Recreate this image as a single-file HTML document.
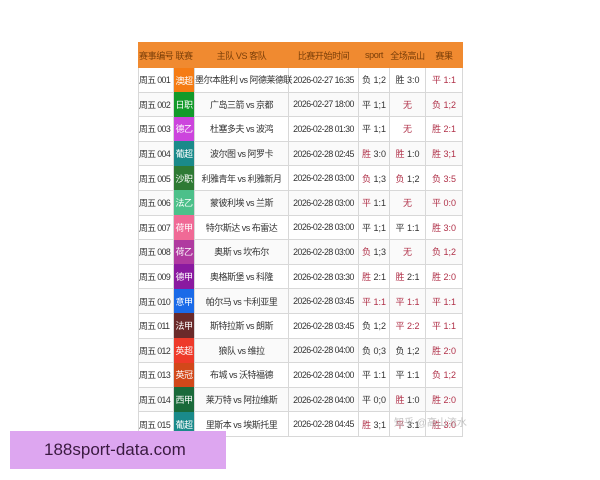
<!DOCTYPE html>
<html><head><meta charset="utf-8"><style>
body{margin:0;width:600px;height:480px;background:#fff;position:relative;overflow:hidden;font-family:"Liberation Sans","Noto Sans CJK SC",sans-serif;}
table{position:absolute;left:138px;top:42px;width:324px;border-collapse:collapse;table-layout:fixed;font-size:9px;color:#333;}
td,th{border:1px solid #d8d8d8;padding:0;text-align:center;white-space:nowrap;overflow:visible;height:23.6px;}
th{background:#f08a30;color:#7a3e08;font-weight:normal;height:24px;border-color:#f08a30;letter-spacing:-0.4px;}
td.lg{color:#fff;border:none;letter-spacing:-0.5px;}
td.c1{text-align:left;padding-left:0;letter-spacing:-0.6px;font-size:8.8px;}
td.t{letter-spacing:-0.55px;font-size:8.8px;}
td.m{letter-spacing:-0.5px;}
.r{color:#b03048;}
tr:nth-child(odd) td{background:#fafafa;}
.wm{position:absolute;left:394px;top:414px;color:rgba(170,170,170,.7);font-size:10px;}
.ban{position:absolute;left:10px;top:431px;width:216px;height:38px;background:#dda6f0;color:#3a1a40;font-size:17px;line-height:38px;text-indent:34px;}
</style></head><body>
<table>
<colgroup><col style="width:35px"><col style="width:21px"><col style="width:94px"><col style="width:70px"><col style="width:31px"><col style="width:36px"><col style="width:37px"></colgroup>
<tr><th>赛事编号</th><th>联赛</th><th>主队 VS 客队</th><th>比赛开始时间</th><th>sport</th><th>全场高山</th><th>赛果</th></tr>
<tr><td class="c1">周五 001</td><td class="lg" style="background:#f57c14">澳超</td><td class="m">墨尔本胜利 vs 阿德莱德联</td><td class="t">2026-02-27 16:35</td><td>负 1;2</td><td>胜 3:0</td><td class="r">平 1:1</td></tr>
<tr><td class="c1">周五 002</td><td class="lg" style="background:#139a2a">日职</td><td class="m">广岛三箭 vs 京都</td><td class="t">2026-02-27 18:00</td><td>平 1;1</td><td class="r">无</td><td class="r">负 1;2</td></tr>
<tr><td class="c1">周五 003</td><td class="lg" style="background:#cc44dd">德乙</td><td class="m">杜塞多夫 vs 波鸿</td><td class="t">2026-02-28 01:30</td><td>平 1;1</td><td class="r">无</td><td class="r">胜 2:1</td></tr>
<tr><td class="c1">周五 004</td><td class="lg" style="background:#1a8a8a">葡超</td><td class="m">波尔图 vs 阿罗卡</td><td class="t">2026-02-28 02:45</td><td><span class="r">胜</span> 3:0</td><td><span class="r">胜</span> 1:0</td><td class="r">胜 3;1</td></tr>
<tr><td class="c1">周五 005</td><td class="lg" style="background:#2e7a34">沙职</td><td class="m">利雅青年 vs 利雅新月</td><td class="t">2026-02-28 03:00</td><td><span class="r">负</span> 1;3</td><td><span class="r">负</span> 1;2</td><td class="r">负 3:5</td></tr>
<tr><td class="c1">周五 006</td><td class="lg" style="background:#4cc08a">法乙</td><td class="m">蒙彼利埃 vs 兰斯</td><td class="t">2026-02-28 03:00</td><td><span class="r">平</span> 1:1</td><td class="r">无</td><td class="r">平 0:0</td></tr>
<tr><td class="c1">周五 007</td><td class="lg" style="background:#f06a96">荷甲</td><td class="m">特尔斯达 vs 布雷达</td><td class="t">2026-02-28 03:00</td><td>平 1;1</td><td>平 1:1</td><td class="r">胜 3:0</td></tr>
<tr><td class="c1">周五 008</td><td class="lg" style="background:#b03aa0">荷乙</td><td class="m">奥斯 vs 坎布尔</td><td class="t">2026-02-28 03:00</td><td><span class="r">负</span> 1;3</td><td class="r">无</td><td class="r">负 1;2</td></tr>
<tr><td class="c1">周五 009</td><td class="lg" style="background:#8a1aa0">德甲</td><td class="m">奥格斯堡 vs 科隆</td><td class="t">2026-02-28 03:30</td><td><span class="r">胜</span> 2:1</td><td><span class="r">胜</span> 2:1</td><td class="r">胜 2:0</td></tr>
<tr><td class="c1">周五 010</td><td class="lg" style="background:#1a6ae8">意甲</td><td class="m">帕尔马 vs 卡利亚里</td><td class="t">2026-02-28 03:45</td><td class="r">平 1:1</td><td class="r">平 1:1</td><td class="r">平 1:1</td></tr>
<tr><td class="c1">周五 011</td><td class="lg" style="background:#6a2a2a">法甲</td><td class="m">斯特拉斯 vs 朗斯</td><td class="t">2026-02-28 03:45</td><td>负 1;2</td><td class="r">平 2:2</td><td class="r">平 1:1</td></tr>
<tr><td class="c1">周五 012</td><td class="lg" style="background:#ee3a2a">英超</td><td class="m">狼队 vs 维拉</td><td class="t">2026-02-28 04:00</td><td>负 0;3</td><td>负 1;2</td><td class="r">胜 2:0</td></tr>
<tr><td class="c1">周五 013</td><td class="lg" style="background:#d2481a">英冠</td><td class="m">布城 vs 沃特福德</td><td class="t">2026-02-28 04:00</td><td>平 1:1</td><td>平 1:1</td><td class="r">负 1;2</td></tr>
<tr><td class="c1">周五 014</td><td class="lg" style="background:#1a6a3a">西甲</td><td class="m">莱万特 vs 阿拉维斯</td><td class="t">2026-02-28 04:00</td><td>平 0;0</td><td><span class="r">胜</span> 1:0</td><td class="r">胜 2:0</td></tr>
<tr><td class="c1">周五 015</td><td class="lg" style="background:#1a8a8a">葡超</td><td class="m">里斯本 vs 埃斯托里</td><td class="t">2026-02-28 04:45</td><td><span class="r">胜</span> 3;1</td><td><span class="r">平</span> 3:1</td><td class="r">胜 3:0</td></tr>
</table>
<div class="wm">知乎 @高山流水</div>
<div class="ban">188sport-data.com</div>
</body></html>
